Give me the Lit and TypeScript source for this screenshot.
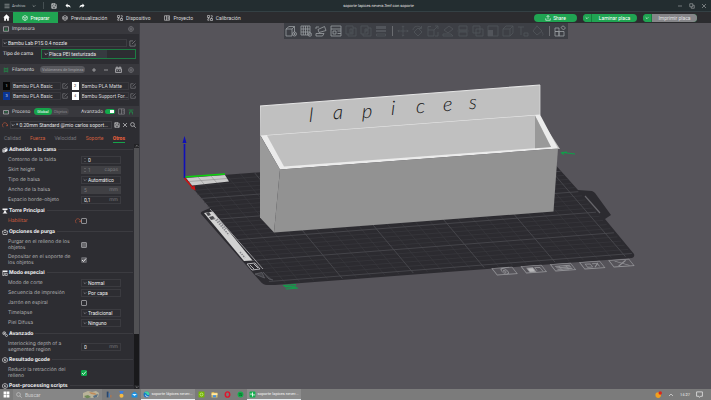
import { LitElement, html, svg, css, nothing } from "lit";
import { customElement, property } from "lit/decorators.js";
import { classMap } from "lit/directives/class-map.js";

type Pt = [number, number];

const ICONS: Record<string, unknown> = {
  menu: svg`<path d="M1 2.5h10M1 6h10M1 9.5h10"/>`,
  down: svg`<path d="M2 4l4 4 4-4"/>`,
  up: svg`<path d="M2 8l4-4 4 4"/>`,
  save: svg`<path d="M1.5 1.5h7l2 2v7h-9z" /><path d="M3.5 1.5v3h4v-3M3.5 10.500v-4h5v4" />`,
  undo: svg`<path class="solid" d="M5 1v2.500c4 0 6 2 6 6C9.500 7.500 8 7 5 7v2.500L1 5.200z"/>`,
  redo: svg`<path class="solid" d="M7 1v2.500c-4 0-6 2-6 6C2.500 7.500 4 7 7 7v2.500l4-4.300z"/>`,
  home: svg`<path class="solid" d="M6 .5L.5 6H2v5.500h3V8h2v3.500h3V6h1.500z"/>`,
  cube: svg`<path d="M6 1l4.500 2.500v5L6 11 1.500 8.500v-5zM1.500 3.500L6 6l4.500-2.500M6 6v5"/>`,
  layers: svg`<path d="M6 1l4.500 2.500L6 6 1.500 3.500zM1.500 6L6 8.500 10.500 6M1.500 8.500L6 11l4.500-2.500M1.500 3.500v5M10.500 3.500v5"/>`,
  device: svg`<path d="M1 1h4v4H1zM7 7h4v4H7zM7.500 1.500h3v3M1.500 7.500v3h3M3 5v3h2M9 4.500V7"/>`,
  project: svg`<path d="M1 1.500h10v9H1zM5 1.500v9M7 4h3M7 6h3M7 8h3"/>`,
  min: svg`<path d="M2 6h8"/>`,
  copy: svg`<path d="M1.500 1.500h6v6h-6zM4.500 7.500v3h6v-6h-3"/>`,
  close: svg`<path d="M2 2l8 8M10 2l-8 8"/>`,
  share: svg`<path d="M6 8V1M3 4l3-3 3 3M1.500 6.500V10.500h9V6.500"/>`,
  printer: svg`<path d="M1 1.500h10v9H1z"/><path class="accent" d="M3 8.500h6M6 4v4"/>`,
  gear: svg`<circle cx="6" cy="6" r="4.800"/><circle cx="6" cy="6" r="1.800"/><path d="M6 1v2M6 9v2M1 6h2M9 6h2"/>`,
  edit: svg`<path d="M7 1.500H1.500v9h9V6M5 7l6-6"/>`,
  spool: svg`<path class="accent" d="M2.500 1v10M9.500 1v10M3 3h6M3 6h6M3 9h6"/>`,
  plus: svg`<path d="M6 2v8M2 6h8"/>`,
  minus: svg`<path d="M2 6h8"/>`,
  ams: svg`<path d="M1 5h10v6H1zM2 5V2h3v3M7 5V2h3v3M3 8h2M7 8h2"/>`,
  process: svg`<path d="M1 3h10v7H1z"/><path class="accent" d="M3 8l3-4 3 4"/>`,
  columns: svg`<path d="M1 1.500h10v9H1zM6 1.500v9M8 4h2M8 7h2"/>`,
  tree: svg`<path class="accent" d="M1 2h10M6 2v4M2 6h8M3 6v5M9 6v5"/>`,
  reset: svg`<path d="M3 10.500A5 5 0 1 1 10.500 8M10.500 8L8 7M10.500 8L11.500 5.500"/>`,
  search: svg`<circle cx="5" cy="5" r="3.800"/><path d="M8 8l3.500 3.500"/>`,
  adhesion: svg`<path class="solid" d="M1 4l7-3 3 1v6l-7 3.500-3-1z"/><path class="cut" d="M1 4l3 1v6.500M4 5l7-3"/>`,
  tower: svg`<path class="solid" d="M1 1h10v3H1zM3 5h6L7.500 7.500 11 11H1l3.500-3.500z"/>`,
  purge: svg`<path d="M6 1l1.500 3H11l-1 7H2L1 4h3.500zM4 7h4"/>`,
  special: svg`<path class="solid" d="M1 1h10v3H1z"/><path d="M1.500 4v7h3V5M6.500 6.500h4v4.500h-4z"/>`,
  advanced: svg`<circle cx="4.500" cy="4.500" r="3"/><path d="M4.500 3v3M3 4.500h3"/><circle cx="9" cy="9" r="2"/>`,
  gcode: svg`<path d="M6 .8l4.800 2.600v5.200L6 11.200 1.200 8.600V3.400z"/><path d="M7.500 4.500H5v3h2.500V6"/>`,
  addcube: svg`<path d="M1 4l3-2.500h5.500V7M1 4h6v7H1zM7 4l2.500-2.500"/><circle cx="9.500" cy="9" r="2"/><path d="M9.500 8v2M8.500 9h2"/>`,
  addplate: svg`<path d="M1 1h9v9H1zM3.300 1v9M5.500 1v9M7.700 1v9M1 4h9M1 7h9"/><circle cx="9.800" cy="9.500" r="1.800"/>`,
  orient: svg`<path d="M3 4.500l6.500-3 1.500 4-7 2zM1 8.500h8l-1.500 2.500H1zM1 4V2h3"/>`,
  arrange: svg`<path d="M1 1h10v10H1zM1 4h10M3 6h3v3H3zM7.500 6H11M7.500 8.500H11"/>`,
  copyobj: svg`<path d="M1 1h7v8H1zM3 9v2h8V3H8M5 4h2v4H5z"/>`,
  pasteobj: svg`<path d="M1 1h7v8H1zM3 9v2h8V3H8M5 8V4h2v2H5"/>`,
  heights: svg`<path class="solid" d="M1 1h10v3H1zM1 5h10v2H1z"/><path d="M1.500 9h9v2h-9z"/>`,
  move: svg`<path d="M6 .8v3M6 8.200v3M.8 6h3M8.200 6h3M4.800 2L6 .8 7.200 2M4.800 10L6 11.200 7.200 10M2 4.800L.8 6 2 7.200M10 4.800L11.200 6 10 7.200M5 5h2v2H5z"/>`,
  rotate: svg`<path d="M6 3l4 4-4 4-4-4zM1 5c0-4 6-5 8-2M9.500 1v2.500H7"/>`,
  scale: svg`<path d="M1 5h6v6H1zM1 5V1.500h3M7 5l4-4M8 1h3v3M11 7v4H8"/>`,
  face: svg`<path d="M2 5l5-4 4 3-5 4zM1 9h8l2 2H1z"/>`,
  cut: svg`<path d="M2 1h8v4H2zM2 7h8v4H2zM.5 6h11"/>`,
  union: svg`<path d="M1 1h7v7H1zM4 4h7v7H4z"/>`,
  support: svg`<path d="M1 1h10v10H1z"/><path class="solid" d="M1 5h5v6H1z"/>`,
  seam: svg`<path d="M1 4l3-3h7v7l-3 3H1zM1 4h7v7M8 4l3-3"/>`,
  textobj: svg`<path d="M1 2h6M4 2v8M7 8h4v3H7z"/>`,
  paint: svg`<path d="M5 1l5 5-5 4-4-4zM5 1V.5M10 7c1 2 1.500 2.500.500 3.500"/>`,
  assemble: svg`<path d="M1 3h4v3.500H1zM1 6.500h4v4.500H1zM5 6.500h5V11H5zM7 2.500L9 .8l2.500 2-2 2.200z"/>`,
  chat: svg`<path d="M1 1.500h10v7.500H8l-2 2-1-2H1z"/>`,
  check: svg`<path d="M2 6l3 3 5-6"/>`,
};

const icon = (name: string, cls = "") =>
  html`<svg class="icon ${cls}" viewBox="0 0 12 12" aria-hidden="true">${ICONS[name]}</svg>`;

const shared = css`
  * { box-sizing: border-box; }
  button, input, select {
    font: inherit; color: inherit; margin: 0; padding: 0; border: 0;
    background: none; border-radius: 0; min-width: 0; appearance: none; outline: 0;
  }
  button { display: inline-flex; align-items: center; justify-content: center; white-space: nowrap; }
  .icon { width: 7px; height: 7px; flex: none; fill: none; stroke: currentColor; stroke-width: 1.2; display: block; }
  .icon .solid { fill: currentColor; stroke: none; }
  .icon .accent { stroke: #1f9a4c; }
  .icon .cut { stroke: #2d2d32; }
  .tiny { width: 4px; height: 4px; stroke-width: 1.800; }
  .small { width: 6px; height: 6px; }
`;

/* ---------- 3D plate ---------- */

/* Maps the unit square onto the four plate corners in perspective. */
function plateProjection([a, b, c, d]: Pt[]) {
  const dx1 = b[0] - c[0], dx2 = d[0] - c[0], sx = a[0] - b[0] + c[0] - d[0];
  const dy1 = b[1] - c[1], dy2 = d[1] - c[1], sy = a[1] - b[1] + c[1] - d[1];
  const det = dx1 * dy2 - dx2 * dy1;
  const g = (sx * dy2 - dx2 * sy) / det;
  const h = (dx1 * sy - sx * dy1) / det;
  return (u: number, v: number): Pt => {
    const w = g * u + h * v + 1;
    return [
      ((b[0] - a[0] + g * b[0]) * u + (d[0] - a[0] + h * d[0]) * v + a[0]) / w,
      ((b[1] - a[1] + g * b[1]) * u + (d[1] - a[1] + h * d[1]) * v + a[1]) / w,
    ];
  };
}

const project = plateProjection([[184, 178], [543, 151], [634, 256], [271, 284]]);
const seg = (p: Pt, q: Pt) => `M${p[0].toFixed(1)} ${p[1].toFixed(1)}L${q[0].toFixed(1)} ${q[1].toFixed(1)}`;

function gridLines(major: boolean) {
  let d = "";
  for (let i = 1; i < 26; i++) {
    if ((i % 5 === 0) !== major) continue;
    const t = i / 25.6;
    d += seg(project(t, 0), project(t, 1)) + seg(project(0, t), project(1, t));
  }
  return d;
}

const PLATE_MARKS = [
  svg`<circle cx="10" cy="3.500" r="2.800"/><circle cx="10" cy="3.500" r="1"/>`,
  svg`<path d="M4 2h6v4H4z" fill="#b8b8ba"/><path d="M12 5V2h5v4"/>`,
  svg`<path d="M3 2h15M3 3.500h15M3 5h15M7 2v4M14 2v4"/>`,
  svg`<path d="M4 2h5v3H4zM11 2h5v3M11 5.500l6-4"/>`,
  svg`<path d="M5 1l11 5M16 1L5 6"/>`,
];

@customElement("plate-view")
export class PlateView extends LitElement {
  static styles = css`
    :host { display: block; width: 100%; height: 100%; }
    svg { display: block; width: 100%; height: 100%; }
    .engraved { font: italic 300 20px Lato, "Open Sans", sans-serif; fill: #161616; }
  `;

  render() {
    return html`
      <svg viewBox="140 23 571 366" preserveAspectRatio="xMidYMid slice" role="img" aria-label="Placa de impresión">
        <path d="M184 178L543 151L578 190L592 191Q594 192 595 193L611 215L605 219L634 254Q635 257 632 258L275 285L267 285Q263 285 260 281L201 214Q200 212 203 211L210 208Z" fill="#2c2b30"/>
        <path d=${gridLines(false)} stroke="#3b3b40" stroke-width=".6" fill="none"/>
        <path d=${gridLines(true)} stroke="#4b4b50" stroke-width=".8" fill="none"/>
        <path d="M585 196L600 213" stroke="#66656a" stroke-width="1.200"/>
        <path d="M204 213L213 211.500L252.500 260.500L244 261Z" fill="#d2d2d2"/>
        <path d="M210 209L263 269" stroke="#b0b0b2" stroke-width=".8"/>
        <path d="M206 213l3-1 2 3-3 1zM209 217l4-1 2 3-4 1z" fill="#4a4a4e"/>
        <path d="M214 218l15 17M217 219l9 10M240 252l5 6" stroke="#85858a" stroke-width="1.500" stroke-dasharray="1.500 1"/>
        <path d="M247 264l8-1 5 6-8 1zM250 265l4 4M254 264l4 4" stroke="#b5b5b8" fill="none"/>
        <path d="M255 274l7-1.500 2.500 5.500zM263 272l6 7 4 1" stroke="#606066" fill="#414146" stroke-width=".8"/>
        <path d="M186 178L225 175L229 181.500L192 185.500Z" fill="#cacaca"/>
        <path d="M189 181.500L227 178.500M198 177l6 7M211 176l6 7" stroke="#8e8e8e" stroke-width=".6"/>
        <path d="M184 177L225 174" stroke="#0bd30b" stroke-width="1.500"/>
        <path d="M184.500 178V144" stroke="#1010b8" stroke-width="1.600"/>
        <path d="M182.500 143L184.500 136L186.500 143Z" fill="#1010b8"/>
        <path d="M184.500 178L192 187" stroke="#d01212" stroke-width="1.500"/>
        <path d="M190.500 188L194.500 185.500L195.500 190.500Z" fill="#d01212"/>
        <path d="M283 285.500l13-1M285 287l11-1M286 289l12-1M284 286l13 2" stroke="#0fa04a" stroke-width="1"/>
        <path d="M575 154l-12-1.500M561 152.500l3 2M562 152.500l5-.5" stroke="#0fa04a" stroke-width="1.100"/>

        <path d="M260 106L540 85V118L560 149L261 136Z" fill="#c0c0c0"/>
        <path d="M260 106L540 85" stroke="#e4e4e4" stroke-width="1.200"/>
        <path d="M540 85V115M260.500 106V136" stroke="#d8d8d8" stroke-width=".8"/>
        <path d="M260.500 135.500L540 114.500L558 148.500L280 169.500Z" fill="#ebebeb"/>
        <path d="M267 135.500L535 115.500L551 147L284 166.500Z" fill="#c0c0c0"/>
        <path d="M535 115.500L551 147L535 148.200Z" fill="#999"/>
        <path d="M280 169.500L558 148.500L553.500 211.500L274 232.500Z" fill="#929292"/>
        <path d="M260 135L280 169.500L274 232.500L260 217.500Z" fill="#9a9a9a"/>
        <text class="engraved" x="309 333 362 391 416 443 469" y="122 119 118 115 113 111 109">lapices</text>

        ${PLATE_MARKS.map((mark, i) => svg`
          <g transform="matrix(1 -0.07 0.8 1 ${492 + i * 29.2} ${268.5 - i * 2})" fill="none" stroke="#929296" stroke-width=".8">
            <path d="M0 0h20v6.500h-20z"/>${mark}
          </g>`)}
      </svg>`;
  }
}

/* ---------- Settings panel ---------- */

interface Option {
  label: string;
  kind: "select" | "number" | "check";
  value?: string;
  unit?: string;
  spin?: boolean;
  disabled?: boolean;
  checked?: boolean;
  tone?: "green" | "grey" | "fill";
  changed?: boolean;
}

const GROUPS: { title: string; icon: string; options: Option[] }[] = [
  {
    title: "Adhesión a la cama", icon: "adhesion", options: [
      { label: "Contorno de la falda", kind: "number", value: "0", spin: true },
      { label: "Skirt height", kind: "number", value: "1", unit: "capas", spin: true, disabled: true },
      { label: "Tipo de balsa", kind: "select", value: "Automático" },
      { label: "Ancho de la balsa", kind: "number", value: "5", unit: "mm", disabled: true },
      { label: "Espacio borde-objeto", kind: "number", value: "0,1", unit: "mm" },
    ],
  },
  { title: "Torre Principal", icon: "tower", options: [{ label: "Habilitar", kind: "check", changed: true }] },
  {
    title: "Opciones de purga", icon: "purge", options: [
      { label: "Purgar en el relleno de los objetos", kind: "check", tone: "fill" },
      { label: "Depositar en el soporte de los objetos", kind: "check", checked: true, tone: "grey" },
    ],
  },
  {
    title: "Modo especial", icon: "special", options: [
      { label: "Modo de corte", kind: "select", value: "Normal" },
      { label: "Secuencia de impresión", kind: "select", value: "Por capa" },
      { label: "Jarrón en espiral", kind: "check" },
      { label: "Timelapse", kind: "select", value: "Tradicional" },
      { label: "Piel Difusa", kind: "select", value: "Ninguno" },
    ],
  },
  { title: "Avanzado", icon: "advanced", options: [{ label: "Interlocking depth of a segmented region", kind: "number", value: "0", unit: "mm" }] },
  { title: "Resultado gcode", icon: "gcode", options: [{ label: "Reducir la retracción del relleno", kind: "check", checked: true, tone: "green" }] },
  { title: "Post-processing scripts", icon: "gcode", options: [] },
];

const FILAMENTS = [
  { n: "1", name: "Bambu PLA Basic", cls: "black" },
  { n: "2", name: "Bambu PLA Matte", cls: "white" },
  { n: "3", name: "Bambu PLA Basic", cls: "blue" },
  { n: "4", name: "Bambu Support For...", cls: "white" },
];

@customElement("option-row")
export class OptionRow extends LitElement {
  @property({ attribute: false }) option!: Option;

  static styles = [shared, css`
    :host { display: block; }
    .row { display: grid; grid-template-columns: 67px 6px 40px; align-items: center; min-height: 10px; padding-left: 8px; color: #adadb0; }
    .row.double { min-height: 15px; }
    label { font-family: Inter, Roboto, sans-serif; line-height: 6px; }
    .changed label { color: #cf5f3e; }
    .reset { color: #c2583a; height: 6px; }
    .field { display: flex; align-items: center; height: 8px; border: 1px solid #3b3b40; padding: 0 2px 0 1px; color: #ececec; }
    .field.off { background: #404044; border-color: #404044; color: #77777b; }
    .field input, .field select { flex: 1; width: 0; height: 6px; line-height: 6px; padding-left: 1px; }
    .unit { color: #78787c; }
    .chev { color: #a0a0a4; }
    .spin { display: flex; flex-direction: column; width: 4px; color: #a0a0a4; }
    .spin .icon { width: 4px; height: 3px; }
    .tick { position: relative; width: 6px; height: 6px; }
    .tick input { display: block; width: 6px; height: 6px; border: 1px solid #8e8e92; border-radius: 1px; }
    .tick.fill input { background: #68686c; }
    .tick.grey input { background: #606065; border-color: #606065; }
    .tick.green input { background: #0fa84c; border-color: #0fa84c; }
    .tick .icon { position: absolute; inset: 0; width: 6px; height: 6px; color: #fff; stroke-width: 1.600; pointer-events: none; }
  `];

  private control(o: Option) {
    if (o.kind === "check") {
      return html`<span class=${classMap({ tick: true, [o.tone ?? "plain"]: true })}>
        <input id="c" type="checkbox" .checked=${!!o.checked}>${o.checked ? icon("check") : nothing}</span>`;
    }
    if (o.kind === "select") {
      return html`<span class="field">${icon("down", "tiny chev")}<select id="c"><option>${o.value}</option></select></span>`;
    }
    return html`<span class=${classMap({ field: true, off: !!o.disabled })}>
      ${o.spin ? html`<span class="spin">${icon("up")}${icon("down")}</span>` : nothing}
      <input id="c" type="text" .value=${o.value ?? ""} ?disabled=${!!o.disabled}>
      ${o.unit ? html`<span class="unit">${o.unit}</span>` : nothing}</span>`;
  }

  render() {
    const o = this.option;
    return html`<div class=${classMap({ row: true, double: o.label.length > 30, changed: !!o.changed })}>
      <label for="c">${o.label}</label>
      ${o.changed ? html`<button class="reset" aria-label="Restablecer">${icon("reset", "small")}</button>` : html`<span></span>`}
      ${this.control(o)}
    </div>`;
  }
}

@customElement("side-panel")
export class SidePanel extends LitElement {
  static styles = [shared, css`
    :host { display: flex; flex-direction: column; min-height: 0; overflow: hidden; background: #2d2d32; color: #e4e4e6; border-right: 1px solid #3c3c42; }
    .bar { display: flex; align-items: center; gap: 3px; height: 11px; flex: none; padding: 0 5px 0 3px; background: #38383d; color: #d0d0d3; }
    .bar h2 { font: inherit; margin: 0; }
    .push { margin-left: auto; }
    .dim { color: #85858a; }
    .printer { display: flex; flex-direction: column; gap: 2px; padding: 5px 3px 5px 2px; }
    .line { display: flex; align-items: center; gap: 2px; }
    .combo { display: flex; align-items: center; flex: 1; height: 8px; min-width: 0; border: 1px solid #3d3d42; }
    .combo select { flex: 1; width: 0; height: 6px; line-height: 6px; padding-left: 1px; }
    .combo.bed { height: 10px; border-color: #1d7d43; padding-left: 2px; }
    .combo.bed select { height: 8px; line-height: 8px; flex: none; width: 59px; background: #363a40; }
    .printer label { width: 37px; padding-left: 1px; }
    .pill { height: 7px; border-radius: 4px; background: #58585d; color: #a2a2a7; padding: 0 2px; font-size: 4px; }
    .filaments { display: grid; grid-template-columns: 1fr 1fr; gap: 2px 4px; padding: 7px 3px 6px 3px; }
    .filament { display: flex; align-items: center; gap: 1px; min-width: 0; }
    .chip { width: 7px; height: 8px; font-size: 4px; line-height: 8px; text-align: center; flex: none; margin-right: 1px; }
    .black { background: #050505; color: #ddd; }
    .white { background: #fff; color: #333; }
    .blue { background: #0a3596; color: #ddd; }
    .name { flex: 1; height: 8px; line-height: 6px; border: 1px solid #39393e; white-space: nowrap; overflow: hidden; color: #d6d6d9; justify-content: flex-start; }
    .switcher { display: flex; border-radius: 4px; background: #444449; color: #85858a; margin-left: 1px; }
    .switcher button { height: 7px; border-radius: 4px; padding: 0 2px; font-size: 4px; }
    .switcher .on { background: #16a34a; color: #fff; padding: 0 3px; }
    .toggle { width: 10px; height: 5px; border-radius: 3px; background: radial-gradient(circle at 7px 50%, #fff 2px, #13a94b 2px); }
    .advanced { display: flex; align-items: center; gap: 2px; }
    .preset { display: flex; align-items: center; gap: 2px; padding: 0 3px 0 2px; height: 16px; flex: none; }
    .revert { color: #c2583a; }
    .tabs { display: flex; justify-content: space-between; padding: 0 14px 0 4px; height: 11px; flex: none; color: #77777c; }
    .tabs button { height: 10px; border-bottom: 1px solid transparent; }
    .tabs .hot { color: #cf5f3e; }
    .tabs .current { color: #f0623c; font-weight: 700; border-color: #16a34a; }
    .body { display: flex; flex: 1; min-height: 0; }
    .groups { flex: 1; min-width: 0; overflow: hidden; }
    .title { display: flex; align-items: center; gap: 1px; height: 11px; padding: 0 1px 0 2px; font-size: 5px; font-weight: 700; margin: 0; color: #f2f2f4; font-family: Inter, Roboto, sans-serif; }
    .title::after { content: ""; flex: 1; border-top: 1px solid #3b3b40; margin-left: 1px; }
    .scroll { width: 5px; flex: none; display: flex; flex-direction: column; align-items: center; background: #19191b; color: #aaa; }
    .thumb { width: 5px; height: 76%; background: #515154; margin-bottom: auto; }
    .scroll button { height: 4px; width: 5px; background: #232326; }
  `];

  render() {
    return html`
      <div class="bar">${icon("printer", "small")}<h2>Impresora</h2><button class="push dim" aria-label="Ajustes de impresora">${icon("gear", "small")}</button></div>
      <div class="printer">
        <div class="line">
          <span class="combo">${icon("down", "tiny")}<select aria-label="Impresora"><option>Bambu Lab P1S 0.4 nozzle</option></select></span>
          <button class="dim" aria-label="Editar">${icon("edit")}</button>
        </div>
        <div class="line">
          <label for="bed">Tipo de cama</label>
          <span class="combo bed">${icon("down", "tiny")}<select id="bed"><option>Placa PEI texturizada</option></select></span>
        </div>
      </div>
      <div class="bar">${icon("spool", "small")}<h2>Filamento</h2>
        <button class="pill push">Volúmenes de limpieza</button>
        <button class="push" aria-label="Añadir">${icon("plus", "small")}</button>
        <button class="push" aria-label="Quitar">${icon("minus", "small")}</button>
        <button class="push" aria-label="AMS">${icon("ams")}</button>
        <button class="push dim" aria-label="Ajustes de filamento">${icon("gear", "small")}</button>
      </div>
      <div class="filaments">
        ${FILAMENTS.map((f) => html`<div class="filament">
          <span class="chip ${f.cls}">${f.n}</span><button class="name">${f.name}</button>
          <button class="dim" aria-label="Editar filamento">${icon("edit", "small")}</button></div>`)}
      </div>
      <div class="bar">${icon("process", "small")}<h2>Proceso</h2>
        <span class="switcher"><button class="on">Global</button><button>Objetos</button></span>
        <span class="advanced push"><label for="adv">Avanzado</label><input class="toggle" id="adv" type="checkbox" checked></span>
        <button class="dim" aria-label="Comparar">${icon("columns")}</button>
        <button aria-label="Lista">${icon("tree", "small")}</button>
      </div>
      <div class="preset">
        <button class="revert" aria-label="Revertir">${icon("reset", "small")}</button>
        <span class="combo">${icon("down", "tiny")}<select aria-label="Perfil"><option>* 0.20mm Standard @mio carlos soport...</option></select></span>
        <button aria-label="Guardar">${icon("save", "small")}</button>
        <button aria-label="Borrar">${icon("close", "small")}</button>
        <button aria-label="Buscar">${icon("search", "small")}</button>
      </div>
      <div class="tabs">
        <button>Calidad</button><button class="hot">Fuerza</button><button>Velocidad</button>
        <button class="hot">Soporte</button><button class="current">Otros</button>
      </div>
      <div class="body">
        <div class="groups">
          ${GROUPS.map((g) => html`<h3 class="title">${icon(g.icon, "small")}${g.title}</h3>
            ${g.options.map((o) => html`<option-row .option=${o}></option-row>`)}`)}
        </div>
        <div class="scroll"><button aria-label="Subir">${icon("up", "tiny")}</button><span class="thumb"></span><button aria-label="Bajar">${icon("down", "tiny")}</button></div>
      </div>`;
  }
}

/* ---------- Shell ---------- */

const NAV = [
  ["cube", "Preparar"], ["layers", "Previsualización"], ["device", "Dispositivo"], ["project", "Proyecto"], ["device", "Calibración"],
];
const TOOLS = [
  ["addcube", "addplate", "orient", "arrange"],
  ["copyobj", "pasteobj", "heights"],
  ["move", "rotate", "scale", "face", "cut", "union", "support", "seam", "textobj", "paint"],
];

@customElement("app-root")
export class AppRoot extends LitElement {
  static styles = [shared, css`
    :host {
      display: flex; flex-direction: column; height: 100vh; overflow: hidden;
      font: 5px/6px Roboto, "Open Sans", sans-serif; color: #e4e4e4; background: #56545a;
      text-rendering: geometricPrecision;
    }
    .titlebar { display: grid; grid-template-columns: 342fr auto 296fr; align-items: center; height: 12px; flex: none; background: #232d30; border-bottom: 1px solid #344044; font-size: 4px; }
    .left { display: flex; align-items: center; padding-left: 4px; color: #b9bfc0; }
    .left .file { gap: 2px; margin-right: 7px; }
    .divider { width: 1px; height: 7px; background: #465053; margin: 0 7px 0 7px; }
    .tool-btns { display: flex; gap: 8px; color: #fff; }
    .window { display: flex; justify-content: flex-end; gap: 6px; padding-right: 4px; color: #a9adae; }
    .nav { display: flex; align-items: center; height: 11px; flex: none; background: #2c2c2f; padding-right: 14px; }
    .home { width: 13px; height: 11px; color: #fff; }
    .tab { height: 11px; min-width: 45px; padding: 0 4px; gap: 3px; color: #dadadc; }
    .tab.current { background: #20a452; color: #fff; }
    .actions { display: flex; gap: 6px; margin-left: auto; color: #fff; }
    .action { display: flex; height: 8px; border-radius: 4px; overflow: hidden; background: #20a452; }
    .action button { height: 8px; }
    .action .main { width: 45px; }
    .action .share { width: 43px; gap: 2px; }
    .action .more { width: 9px; background: #20a452; border-right: 1px solid #17803f; }
    .action .idle { background: #858588; color: #e0e0e2; }
    .work { display: grid; grid-template-columns: 140px 1fr; flex: 1; min-height: 0; }
    .stage { position: relative; min-width: 0; min-height: 0; overflow: hidden; }
    .floating { position: absolute; top: 0; left: 50%; transform: translateX(-50%); display: flex; align-items: center; height: 16px; background: #3d3f45; color: #52555b; }
    .floating button { width: 15px; height: 16px; }
    .floating .icon { width: 12px; height: 12px; stroke-width: .8; }
    .lit { display: flex; color: #9b9ea2; }
    .set { display: flex; }
    .bar { width: 1px; height: 10px; background: #6a6c70; margin: 0 3px; }
    .taskbar { display: flex; align-items: center; height: 11px; flex: none; background: #7b7b7b; color: #f4f4f4; padding-right: 8px; }
    .start { width: 13px; height: 11px; color: #fff; }
    .find { display: flex; align-items: center; gap: 3px; width: 89px; height: 11px; padding: 0 2px 0 3px; background: #868686; }
    .find input { flex: 1; width: 0; height: 8px; }
    .find input::placeholder { color: #d0d0d0; opacity: 1; }
    .find .icon { color: #d0d0d0; }
    .art { width: 18px; height: 9px; flex: none; }
    .dock { display: flex; }
    .dock button { width: 13px; height: 11px; }
    .glyph { width: 7px; height: 7px; display: block; flex: none; }
    .task { width: 54px; height: 11px; gap: 1px; font-size: 4px; background: #8c8c8c; border-bottom: 1px solid #e8eef2; }
    .tray { display: flex; align-items: center; gap: 6px; margin-left: auto; font-size: 4px; }
  `];

  render() {
    return html`
      <header class="titlebar">
        <div class="left">
          <button class="file">${icon("menu", "small")}Archivo</button>
          <button aria-label="Más">${icon("down", "tiny")}</button>
          <span class="divider"></span>
          <span class="tool-btns">
            <button aria-label="Guardar">${icon("save", "small")}</button>
            <button aria-label="Deshacer">${icon("undo", "small")}</button>
            <button aria-label="Rehacer">${icon("redo", "small")}</button>
          </span>
        </div>
        <span>soporte lapices nevera.3mf con soporte</span>
        <div class="window">
          <button aria-label="Minimizar">${icon("min", "small")}</button>
          <button aria-label="Restaurar">${icon("copy", "small")}</button>
          <button aria-label="Cerrar">${icon("close", "small")}</button>
        </div>
      </header>
      <nav class="nav">
        <button class="home" aria-label="Inicio">${icon("home")}</button>
        ${NAV.map(([ic, label], i) => html`<button class=${classMap({ tab: true, current: i === 0 })}>${icon(ic, "small")}${label}</button>`)}
        <div class="actions">
          <span class="action"><button class="share">${icon("share", "small")}Share</button></span>
          <span class="action"><button class="more" aria-label="Opciones">${icon("down", "tiny")}</button><button class="main">Laminar placa</button></span>
          <span class="action"><button class="more" aria-label="Opciones">${icon("down", "tiny")}</button><button class="main idle">Imprimir placa</button></span>
        </div>
      </nav>
      <main class="work">
        <side-panel></side-panel>
        <section class="stage">
          <plate-view></plate-view>
          <div class="floating">
            ${TOOLS.map((set, i) => html`${i === 2 ? html`<span class="bar"></span>` : nothing}
              <span class=${i === 0 ? "lit" : "set"}>${set.map((t) => html`<button aria-label=${t}>${icon(t)}</button>`)}</span>`)}
            <span class="bar"></span>
            <span class="lit"><button aria-label="assemble">${icon("assemble")}</button></span>
          </div>
        </section>
      </main>
      <footer class="taskbar">
        <button class="start" aria-label="Inicio"><svg class="glyph" viewBox="0 0 12 12"><path fill="#fff" d="M1 1h4.600v4.600H1zM6.400 1H11v4.600H6.400zM1 6.400h4.600V11H1zM6.400 6.400H11V11H6.400z"/></svg></button>
        <div class="find">${icon("search", "small")}<input type="text" placeholder="Buscar" aria-label="Buscar">
          <svg class="art" viewBox="0 0 18 9"><path fill="#b9b39a" d="M1 3l5-2 4 1 4-1 3 2-1 4-6 1-5-1-4 1z"/><path fill="#6f8a58" d="M2 6l4-1 3 2-4 1.500z"/><path fill="#c08a58" d="M7 2l6 1 2 2-6-1z"/><path fill="#5a7288" d="M11 6l5-2-1 3-3 1z"/></svg>
        </div>
        <div class="dock">
          <button aria-label="Biblioteca"><svg class="glyph" viewBox="0 0 12 12"><path fill="#27466e" d="M3 1h3v10H3z"/><path fill="#4d7fb8" d="M6.500 4h2v7h-2z"/><path fill="#b5744a" d="M9 7h2v4H9z"/></svg></button>
          <button aria-label="Medalla"><svg class="glyph" viewBox="0 0 12 12"><path fill="#3a7de0" d="M2 0h8L7.500 5h-3z"/><circle cx="6" cy="8" r="3.500" fill="#f4b942"/></svg></button>
          <button aria-label="Correo"><svg class="glyph" viewBox="0 0 12 12"><path fill="#1a8fe0" d="M1 5l5-4 5 4v6H1z"/><path fill="#d8f1ff" d="M2 5h8L6 8.500z"/></svg></button>
        </div>
        <button class="task"><svg class="glyph" viewBox="0 0 12 12"><circle cx="6" cy="6" r="5" fill="#1578c8"/><path fill="#45d0a0" d="M2 3a5 5 0 0 1 9 2c0 2-3 2.500-4 1.500C6 4 4 3 2 3z"/><path fill="#fff" d="M5 6c0 3 3 3.500 5 3-2 2-6 1-6-2z"/></svg>soporte lápices never...</button>
        <div class="dock">
          <button aria-label="Nvidia"><svg class="glyph" viewBox="0 0 12 12"><rect x="1" y="1" width="10" height="10" fill="#76b900"/><circle cx="6" cy="6" r="2.500" fill="none" stroke="#e6f5c8"/></svg></button>
          <button aria-label="Explorador"><svg class="glyph" viewBox="0 0 12 12"><path fill="#f5c84b" d="M1 2h4l1 1h5v8H1z"/><path fill="#4a90d9" d="M3 7h6v4H3z"/><path fill="#ffe9a8" d="M1 4h10v3H1z"/></svg></button>
          <button aria-label="Opera"><svg class="glyph" viewBox="0 0 12 12"><ellipse cx="6" cy="6" rx="3.800" ry="4.500" fill="none" stroke="#e0152c" stroke-width="2.500"/></svg></button>
          <button aria-label="Spotify"><svg class="glyph" viewBox="0 0 12 12"><circle cx="6" cy="6" r="5" fill="#12b04a"/><path d="M3 5q3-1 6 .5M3.500 7.500q2.500-1 5 .3" fill="none" stroke="#0c3a1c"/></svg></button>
        </div>
        <button class="task"><svg class="glyph" viewBox="0 0 12 12"><rect x="1" y="1" width="10" height="10" rx="1" fill="#0fae4b"/><path stroke="#fff" stroke-width="1.500" d="M6 2.500v7M3.500 4v3M8.500 5v3"/></svg>soporte lapices never...</button>
        <div class="tray">
          <svg class="glyph" viewBox="0 0 12 12"><circle cx="5.500" cy="7" r="4.800" fill="#f2a01e"/><circle cx="9" cy="3.500" r="3" fill="#d9261c"/></svg>
          ${icon("up", "small")}<span>14:27</span>${icon("chat")}
        </div>
      </footer>`;
  }
}
